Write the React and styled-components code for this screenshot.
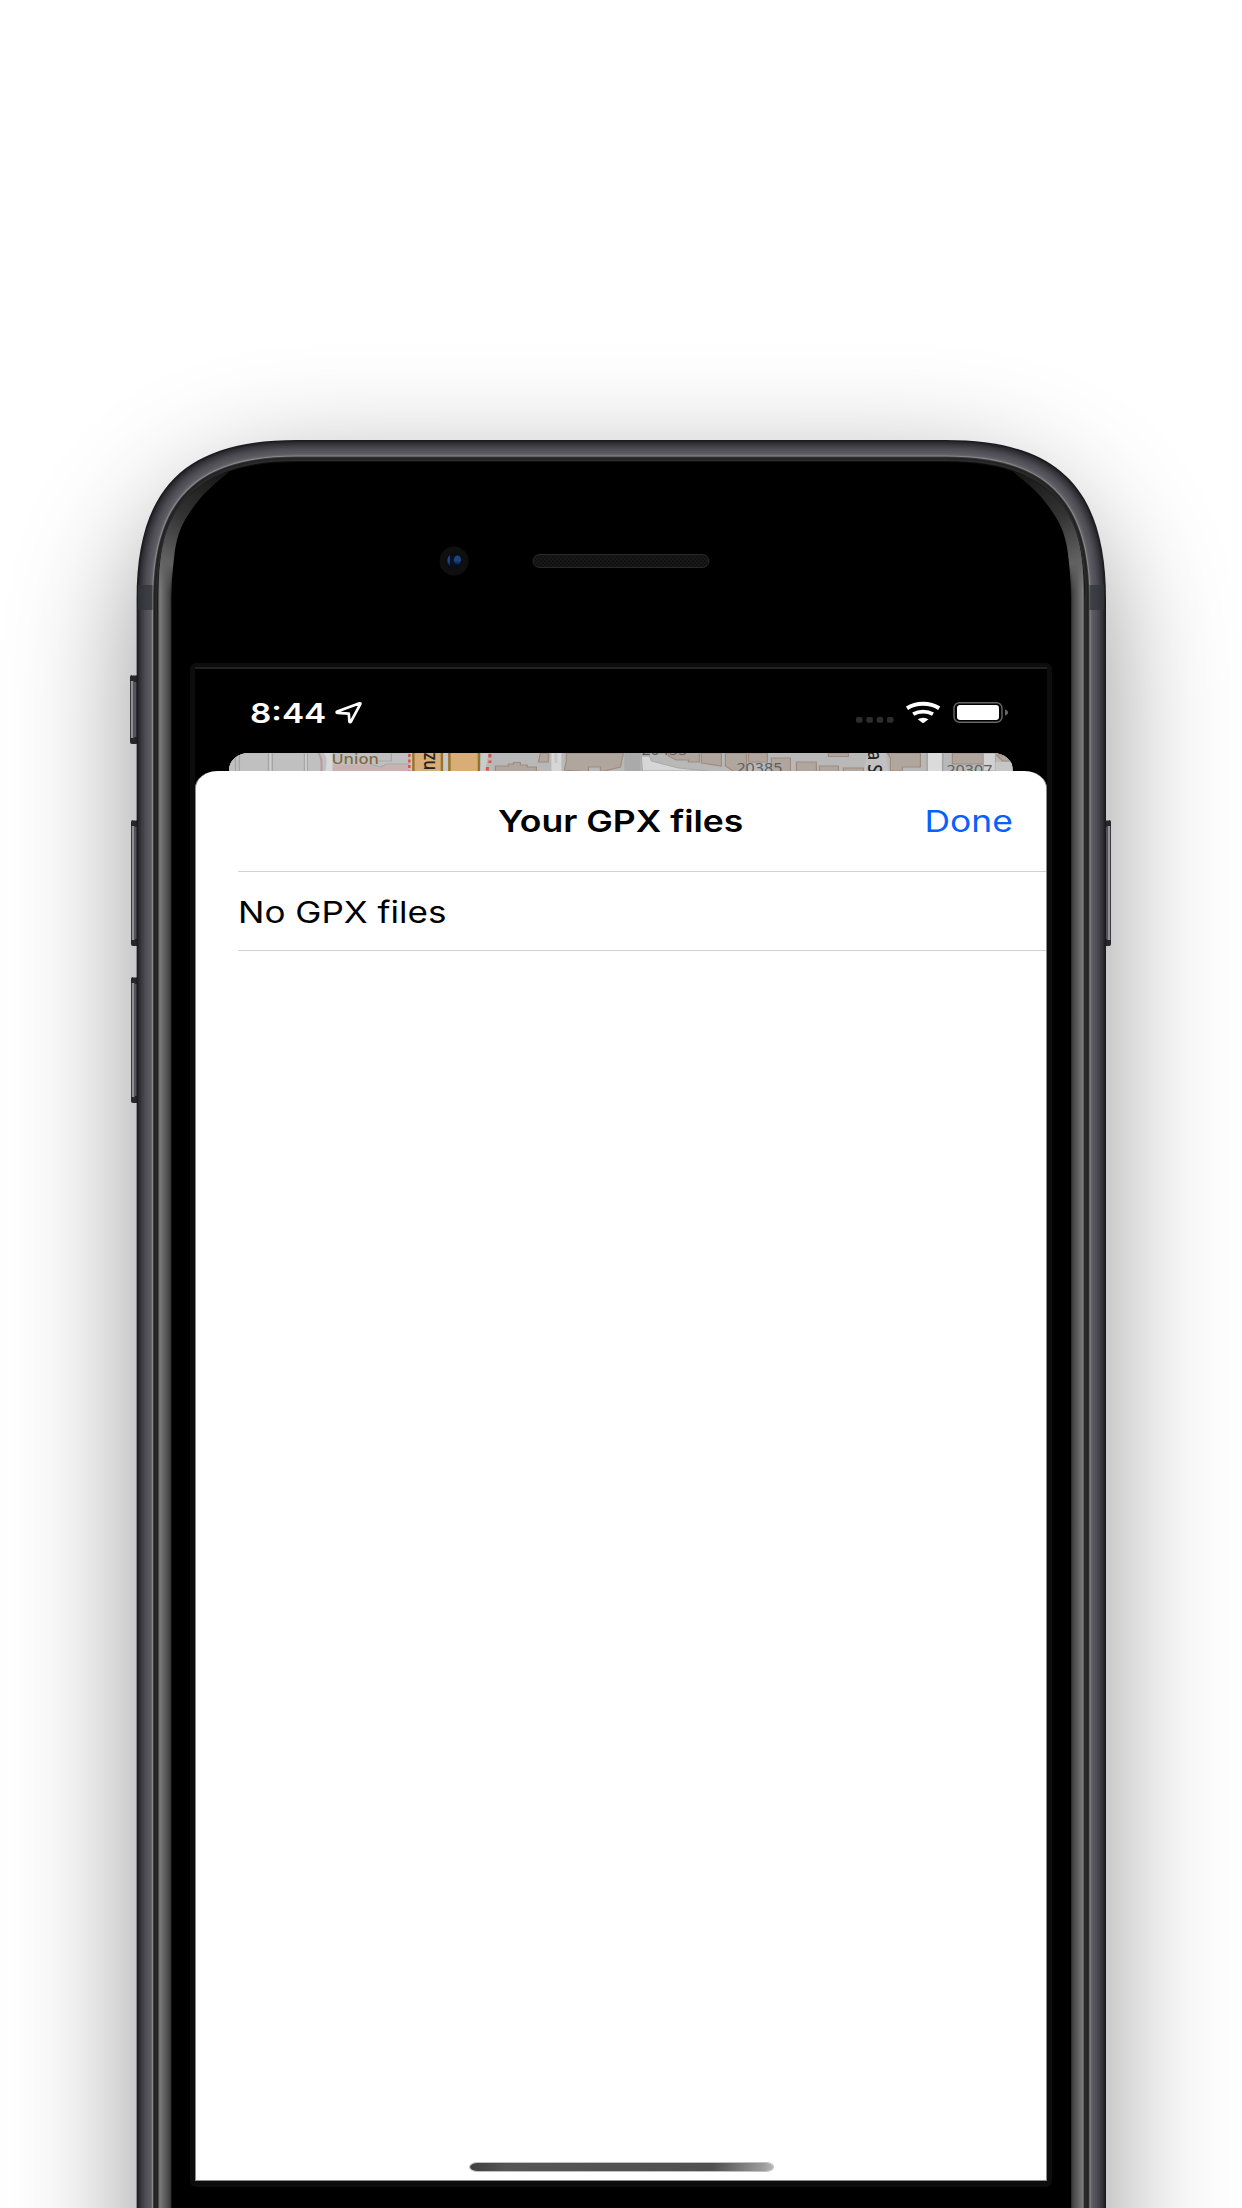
import React from "react";
import styled, { createGlobalStyle } from "styled-components";

const Global = createGlobalStyle`
  * { box-sizing: border-box; }
  html, body { margin: 0; background: #fff; }
  body { font-family: Inter, "Liberation Sans", sans-serif; }
`;

const Page = styled.main`
  display: flex;
  justify-content: center;
  width: 1242px;
  height: 2208px;
  padding-top: 440px;
  overflow: hidden;
  background: #fff;
`;

const Phone = styled.section`
  position: relative;
  display: flex;
  flex-direction: column;
  flex: none;
  width: 970px;
  height: 2000px;
  border-radius: 165px;
  box-shadow: 0 40px 124px rgba(0, 0, 0, 0.42);
`;

const Hardware = styled.svg`
  position: absolute;
  inset: 0;
  overflow: visible;
`;

const Display = styled.div`
  position: relative;
  display: flex;
  flex-direction: column;
  width: 862px;
  height: 1524px;
  margin: 223px 0 0 54px;
  padding: 4px 5px 6px;
  border-radius: 6px;
  background: #0d0d0d;
`;

const Screen = styled.div`
  display: flex;
  flex-direction: column;
  height: 1514px;
  border-top: 2px solid #222;
  background: #000;
`;

const StatusBar = styled.header`
  display: flex;
  align-items: flex-start;
  height: 84px;
  padding: 32px 39px 0 55px;
`;

const Stretched = styled.span`
  display: block;
  flex: none;
  white-space: nowrap;
  font-size: ${(p) => p.$size}px;
  line-height: ${(p) => p.$line}px;
  font-weight: ${(p) => p.$weight || 400};
  color: ${(p) => p.$color || "#000"};
  transform: scaleX(${(p) => p.$stretch});
  transform-origin: ${(p) => p.$origin || "left"} center;
`;

const Clock = styled.div`
  width: 84px;
`;

const Indicators = styled.div`
  display: flex;
  margin-left: auto;
`;

const MapPeek = styled.div`
  height: 18px;
  margin: 0 34px;
  border-radius: 20px 20px 0 0 / 17px 17px 0 0;
  overflow: hidden;
  background: #bababa;

  svg { display: block; }
`;

const Sheet = styled.article`
  display: flex;
  flex-direction: column;
  flex: 1;
  border: 1px solid #8c8c8c;
  border-top: 0;
  border-radius: 23px 23px 0 0 / 17px 17px 0 0;
  background: #fff;
`;

const NavBar = styled.nav`
  display: grid;
  grid-template-columns: 1fr auto 1fr;
  align-items: center;
  height: 100px;
  padding: 0 33px;
`;

const Action = styled.button`
  display: flex;
  justify-content: flex-end;
  padding: 0;
  border: 0;
  background: none;
  font-family: inherit;
`;

const Row = styled.div`
  display: flex;
  align-items: center;
  height: 80px;
  margin-left: 42px;
  padding-top: 1px;
  border: solid #d2d2d4;
  border-width: 1px 0;
`;

const HomeIndicator = styled.div`
  width: 305px;
  height: 10px;
  margin: auto auto 8px;
  border-radius: 8px / 5px;
  border: 1px solid rgba(150, 150, 150, 0.6);
  background: linear-gradient(100deg, #3e3e3e, #555 12%, #505050 80%, #999 96%, #b5b5b5);
  background-clip: padding-box;
`;

const outline = (d) => {
  const l = 160 - d;
  const h = l * 0.3;
  const a = 0.5 + d;
  const b = 970 - d;
  return `M${a} 1800V${160} C${a} ${d + h} ${a + h} ${d} ${a + l} ${d}H${b - l} C${b - h} ${d} ${b} ${d + h} ${b} 160V1800Z`;
};

const shell = [
  [0, "#1b1b1f"], [1, "#222226"], [2, "#2a2a2f"], [3, "#323238"], [4.5, "#3b3a41"],
  [6, "#434249"], [7.5, "#4a4950"], [9, "#514f57"], [11, "#57565d"], [13, "#5e5d64"],
  [14.5, "#67666c"], [15.5, "#88878b"], [16.6, "#3b3b3b"], [17.4, "#222"],
  [19, "#2a2a2a"], [21, "#101010"], [22, "#000"],
];

const BEVEL =
  "M22 1800V160C23 115 28 88 44 66C58 48 76 36 93 32C78 44 69 52 62 61C45 82 40 97 38 118C36 135 35.5 145 35.5 165V1800Z";

function SideButton({ x, y, h, flip }) {
  return (
    <g transform={flip ? `translate(${x + 7} ${y}) scale(-1 1)` : `translate(${x} ${y})`}>
      <rect width="8" height={h} rx="2" fill="#26262b" />
      <rect x="0.8" y="6" width="2.6" height={h - 12} fill="#8f9097" />
      <rect x="3.4" y="7" width="3.2" height={h - 14} fill="#54545b" />
      <rect x="2" y="0" width="5" height="1" fill="#77777c" />
    </g>
  );
}

function Body() {
  return (
    <Hardware width="970" height="1768" viewBox="0 0 970 1768">
      <defs>
        <linearGradient id="bevel" gradientUnits="userSpaceOnUse" x1="22" x2="36" y1="0" y2="0">
          <stop offset="0" stopColor="#3a3a3a" />
          <stop offset=".12" stopColor="#7c7c7c" />
          <stop offset=".3" stopColor="#6d6d6d" />
          <stop offset=".85" stopColor="#414141" />
          <stop offset="1" stopColor="#1c1c1c" />
        </linearGradient>
        <linearGradient id="curve" gradientUnits="userSpaceOnUse" x1="92" x2="26" y1="32" y2="150">
          <stop offset="0" stopColor="#161616" />
          <stop offset=".45" stopColor="#333" />
          <stop offset=".8" stopColor="#626262" />
          <stop offset="1" stopColor="#626262" stopOpacity="0" />
        </linearGradient>
        <radialGradient id="lens">
          <stop offset="0" stopColor="#06152d" />
          <stop offset="1" stopColor="#080b12" />
        </radialGradient>
        <linearGradient id="glint" x1="0" x2="0" y1="0" y2="1">
          <stop offset="0" stopColor="#1d447c" />
          <stop offset=".55" stopColor="#1a4580" />
          <stop offset="1" stopColor="#081a3a" />
        </linearGradient>
        <pattern id="mesh" width="4" height="4" patternUnits="userSpaceOnUse">
          <rect width="4" height="4" fill="#181818" />
          <circle cx="1" cy="1" r=".8" fill="#060606" />
          <circle cx="3" cy="3" r=".8" fill="#060606" />
        </pattern>
      </defs>
      <SideButton x={-6} y={235} h={69} />
      <SideButton x={-5} y={380} h={126} />
      <SideButton x={-5} y={537} h={126} />
      <SideButton x={968} y={380} h={126} flip />
      {shell.map(([d, color]) => (
        <path key={d} d={outline(d)} fill={color} />
      ))}
      <g fill="#33363a" fillOpacity=".75">
        <rect x="2" y="145" width="14.5" height="25" />
        <rect x="953.5" y="145" width="14.5" height="25" />
      </g>
      {["", "translate(970.5 0) scale(-1 1)"].map((t) => (
        <g key={t} transform={t || undefined}>
          <path d={BEVEL} fill="url(#bevel)" />
          <path
            d="M22 160C23 115 28 88 44 66C58 48 76 36 93 32C78 44 69 52 62 61C45 82 40 97 38 118C36 135 35.5 145 35.5 165Z"
            fill="url(#curve)"
          />
        </g>
      ))}
      <circle cx="318" cy="121" r="14.5" fill="#0f0f10" />
      <circle cx="318" cy="121" r="8.5" fill="url(#lens)" />
      <path d="M314 115C310.500 117 310.500 124 314 126.500Z" fill="url(#glint)" />
      <ellipse cx="321.500" cy="120" rx="3.6" ry="4.6" fill="url(#glint)" />
      <rect x="397" y="114.500" width="176" height="13" rx="6.500" fill="url(#mesh)" stroke="#2a2a2a" />
    </Hardware>
  );
}

function LocationArrow() {
  return (
    <svg width="30" height="26" viewBox="0 0 30 26">
      <path
        d="M3.200 10.600L25.600 2.300C26.300 2.100 26.600 2.500 26.300 3.100L16.800 20.800C16.400 21.500 15.500 21.400 15.400 20.600L14.800 12.600L3.500 11.900C2.400 11.800 2.300 11 3.200 10.600Z"
        fill="none"
        stroke="#fff"
        strokeWidth="2.700"
        strokeLinejoin="round"
      />
    </svg>
  );
}

function StatusIcons() {
  return (
    <svg width="156" height="26" viewBox="0 0 156 26">
      <g fill="#2d2d2d">
        {[0, 10.3, 20.6, 30.900].map((x) => (
          <rect key={x} x={4 + x} y="16" width="6.600" height="5.800" rx="2" />
        ))}
      </g>
      <g fill="none" stroke="#fff" strokeWidth="4">
        <path d="M55 7.200A25 19 0 0 1 87.200 7.200" />
        <path d="M61.200 13.100A16 12 0 0 1 81 13.100" strokeWidth="3.800" />
      </g>
      <path d="M65.700 18.200A8 6 0 0 1 76.500 18.200L71.900 21.700Q71.100 22.200 70.300 21.700Z" fill="#fff" />
      <rect x="102" y="1.700" width="48" height="19.600" rx="5.500" fill="none" stroke="#686668" strokeWidth="1.400" />
      <rect x="105" y="4" width="42" height="15" rx="3.200" fill="#fff" />
      <path d="M153 8.500C157 9.500 157 13.500 153 14.500Z" fill="#686668" />
    </svg>
  );
}

const BUILDINGS =
  "M267 18V13H280V11H285V9.500H292V12H299V14H308V18M312 0H320V9H310ZM338 0V8L336 17L360 19V14H372V19L392 14L395 0ZM426 0H440V3L448 7H460V9H471V0M473 0H493V13L473 10ZM497 0H518V20H508L497 13ZM520 0H539V9H520ZM543 5H562V20H543ZM568 9H588V20H568ZM591 13H610V20H591ZM600 0H620V3.500H600ZM615 15H635V20H615ZM659 0H692V14H674V18H662V5ZM724 0H755V11H724ZM768 2H784V8H774Z";

function MapStrip() {
  return (
    <svg width="783" height="18" viewBox="0.6 0 783 18" fontFamily="'Noto Sans', sans-serif">
      <rect width="785" height="18" fill="#b8b8b8" />
      <rect width="182" height="18" fill="#c0c0c0" />
      <path d="M104 11.500H140L150 15L157 11.500H181V18H104Z" fill="#c7b1b1" />
      <path d="M150 8H163V0M141 11L152 14L158 11H181V0" fill="none" stroke="#a7a7a7" strokeWidth="1.200" />
      <path d="M7 0V18M11 0V18M40 0V18M44 0V18M76 0V18M79 0V18" stroke="#a6a6a6" strokeWidth="1.300" />
      <path d="M42 0V18M77.500 0V18" stroke="#d0d0d0" strokeWidth="1.400" />
      <path d="M90 0Q94 5 93 18" fill="none" stroke="#bd9999" strokeWidth="2" />
      <path d="M95 0Q100 4 97 18H104V0Z" fill="#d8d8d8" />
      <rect x="181" width="4" height="18" fill="#d0c7c0" />
      <rect x="184" width="30" height="18" fill="#d8ad77" />
      <rect x="220" width="31" height="18" fill="#d8ad77" />
      <path d="M185 0V18M213.500 0V18M221 0V18M250.500 0V18" stroke="#96742f" strokeWidth="2.400" />
      <rect x="215" width="4.500" height="18" fill="#c9c9c9" />
      <path d="M253 0H260L257 18H252Z" fill="#cbcbcb" />
      <path d="M181 1V18" stroke="#df5148" strokeWidth="2.500" strokeDasharray="3 2.500" />
      <path d="M261.500 1V10M259 14V18" stroke="#df5148" strokeWidth="3" strokeDasharray="3.500 3" />
      <path d={BUILDINGS} fill="#b0a69e" stroke="#a08c7f" strokeWidth="1.200" />
      <rect x="323" width="10" height="18" fill="#d6d6d6" />
      <rect x="326" y="0" width="3" height="10" fill="#c5c5c5" />
      <rect x="396" width="16" height="18" fill="#aaa" />
      <path d="M413 3H421L423 8L450 15L480 18H414Z" fill="#d6d6d6" stroke="#a8a8a8" />
      <path d="M638 0H657L660 18H636Z" fill="#c1c1c1" />
      <rect x="698" width="17" height="18" fill="#a2a2a2" />
      <rect x="699.500" width="14" height="18" fill="#dbdbdb" />
      <path d="M755 0H767V18H755Z" fill="#d2d2d2" stroke="#a6a6a6" />
      <path d="M767 9H784V18H767Z" fill="#c6c6c6" />
      <g fontSize="15" fill="#606060">
        <text x="413" y="2.200" textLength="46" lengthAdjust="spacingAndGlyphs">20455</text>
        <text x="508" y="20" textLength="46" lengthAdjust="spacingAndGlyphs">20385</text>
        <text x="718" y="21.500" textLength="46" lengthAdjust="spacingAndGlyphs">20307</text>
      </g>
      <text x="103" y="11" fontSize="14" fontWeight="500" fill="#80673c" textLength="47.500" lengthAdjust="spacingAndGlyphs">Union</text>
      <text transform="translate(207 26.500) rotate(-90) scale(1 1.2)" fontSize="16" fontWeight="500" fill="#222">anzu</text>
      <text transform="translate(640 -2) rotate(90) scale(1 1.2)" fontSize="16" fontWeight="500" fill="#222">a S</text>
    </svg>
  );
}

export default function App() {
  return (
    <>
      <Global />
      <Page>
        <Phone>
          <Body />
          <Display>
            <Screen>
              <StatusBar>
                <Clock>
                  <Stretched $size={27.5} $line={24} $weight={600} $color="#fff" $stretch={1.21}>8:44</Stretched>
                </Clock>
                <LocationArrow />
                <Indicators>
                  <StatusIcons />
                </Indicators>
              </StatusBar>
              <MapPeek>
                <MapStrip />
              </MapPeek>
              <Sheet>
                <NavBar>
                  <span />
                  <Stretched $size={30} $line={36} $weight={600} $stretch={1.184} $origin="center">Your GPX files</Stretched>
                  <Action>
                    <Stretched $size={30} $line={36} $color="#0a60ff" $stretch={1.18} $origin="right">Done</Stretched>
                  </Action>
                </NavBar>
                <Row>
                  <Stretched $size={30} $line={36} $stretch={1.168}>No GPX files</Stretched>
                </Row>
                <HomeIndicator />
              </Sheet>
            </Screen>
          </Display>
        </Phone>
      </Page>
    </>
  );
}
